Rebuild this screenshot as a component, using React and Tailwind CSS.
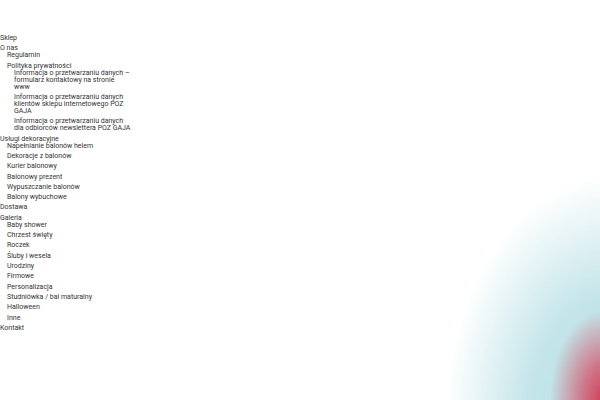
import React from "react";

const menu = [
  { label: "Sklep" },
  {
    label: "O nas",
    children: [
      { label: "Regulamin" },
      {
        label: "Polityka prywatności",
        children: [
          { label: "Informacja o przetwarzaniu danych – formularz kontaktowy na stronie www" },
          { label: "Informacja o przetwarzaniu danych klientów sklepu internetowego POZ GAJA" },
          { label: "Informacja o przetwarzaniu danych dla odbiorców newslettera POZ GAJA" },
        ],
      },
    ],
  },
  {
    label: "Usługi dekoracyjne",
    children: [
      { label: "Napełnianie balonów helem" },
      { label: "Dekoracje z balonów" },
      { label: "Kurier balonowy" },
      { label: "Balonowy prezent" },
      { label: "Wypuszczanie balonów" },
      { label: "Balony wybuchowe" },
    ],
  },
  { label: "Dostawa" },
  {
    label: "Galeria",
    children: [
      { label: "Baby shower" },
      { label: "Chrzest święty" },
      { label: "Roczek" },
      { label: "Śluby i wesela" },
      { label: "Urodziny" },
      { label: "Firmowe" },
      { label: "Personalizacja" },
      { label: "Studniówka / bal maturalny" },
      { label: "Halloween" },
      { label: "Inne" },
    ],
  },
  { label: "Kontakt" },
];

function List({ items, nested }) {
  return (
    <ul className={nested ? "pl-[7px]" : ""}>
      {items.map((it) => (
        <li key={it.label} className="mb-[3.32px]">
          <a className="block">{it.label}</a>
          {it.children && <List items={it.children} nested />}
        </li>
      ))}
    </ul>
  );
}

export default function App() {
  return (
    <div
      className="relative h-[400px] w-[600px] overflow-hidden bg-white bg-[radial-gradient(ellipse_55px_90px_at_605px_400px,#d23a55_0%,rgba(214,70,95,0.7)_40%,rgba(210,90,110,0)_100%),radial-gradient(ellipse_170px_245px_at_615px_420px,#bfe2e7_0%,#c3e4e9_50%,rgba(196,228,233,0)_100%)]"
      style={{ fontFamily: "Roboto, 'Liberation Sans', sans-serif" }}
    >
      <nav className="w-[131px] pt-[35px] text-[7px] leading-[7px] text-[#333]">
        <List items={menu} />
      </nav>
    </div>
  );
}
